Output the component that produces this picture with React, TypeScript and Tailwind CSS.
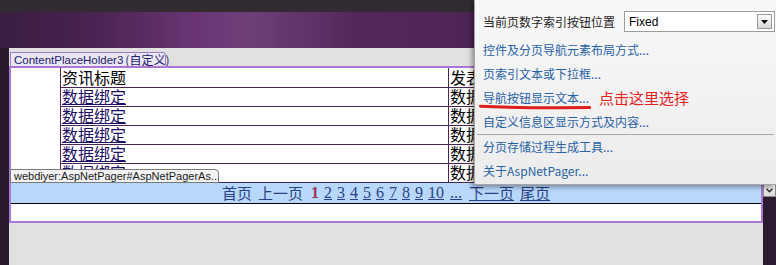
import React from "react";

const rows = [0, 1, 2, 3, 4];

export default function App() {
  return (
    <div className="relative w-[776px] h-[265px] overflow-hidden bg-[#2a1a2e] font-['Liberation_Sans',sans-serif]">
      <div className="h-[12px] bg-[#322b32]" />
      <div className="h-[36px] bg-[linear-gradient(90deg,#3a1d41_0%,#4a2352_12%,#6a3473_25%,#70407a_32%,#55285d_45%,#4c2254_65%,#43204a_100%)]" />
      <div className="flex h-[217px]">
        <div className="w-[9px] bg-[#2a1a2e]" />
        <div className="w-[754px] bg-[#e1e1e1] flex flex-col">
          <div className="h-[4px]" />
          <div className="ml-[1px] w-[156px] h-[14px] bg-[#ebe6f4] border border-b-0 border-[#9a7cc6] rounded-tr-[4px] flex items-center pl-[3px] text-[11.5px] leading-[12px] text-[#20206a] whitespace-nowrap">
            <span>ContentPlaceHolder3</span>
            <span className="ml-[2px] font-['Noto_Sans_CJK_SC',sans-serif] text-[12px]">(自定义)</span>
          </div>
          <div className="border-2 border-[#a878d4] bg-white flex flex-col">
            <div className="ml-[49px] flex flex-col font-['Noto_Sans_CJK_SC',sans-serif] text-[16px] leading-[19px]">
              <div className="flex h-[20px] border-b border-l border-[#4a2658]">
                <div className="w-[388px] border-r border-[#4a2658] pl-[1px] text-black whitespace-nowrap">资讯标题</div>
                <div className="flex-1 pl-[1px] text-black whitespace-nowrap">发表时间</div>
              </div>
              {rows.map((r) => (
                <div key={r} className="flex h-[19px] border-b border-l border-[#4a2658]">
                  <div className="w-[388px] border-r border-[#4a2658] pl-[1px] leading-[17px] text-[#1c0e62] underline whitespace-nowrap">数据绑定</div>
                  <div className="flex-1 pl-[1px] leading-[17px] text-black whitespace-nowrap">数据绑定</div>
                </div>
              ))}
            </div>
            <div className="h-[21px] bg-[#b8d8fa] border-b border-black flex items-center justify-center gap-[5px] font-['Liberation_Serif','Noto_Sans_CJK_SC',serif] text-[16px] leading-[20px] text-[#2b3f86] whitespace-nowrap">
              <span className="font-['Noto_Sans_CJK_SC',sans-serif] text-[15px]">首页</span>
              <span className="ml-[1px] font-['Noto_Sans_CJK_SC',sans-serif] text-[15px]">上一页</span>
              <span className="ml-[3px] font-bold text-[#a03050]">1</span>
              {["2", "3", "4", "5", "6", "7", "8", "9", "10"].map((n) => (
                <span key={n} className="underline">{n}</span>
              ))}
              <span className="ml-[1px] underline">...</span>
              <span className="ml-[2px] underline font-['Noto_Sans_CJK_SC',sans-serif] text-[15px]">下一页</span>
              <span className="ml-[1px] underline font-['Noto_Sans_CJK_SC',sans-serif] text-[15px]">尾页</span>
            </div>
            <div className="h-[17px] bg-white" />
          </div>
        </div>
        <div className="flex-1 bg-[#2c1a31]" />
      </div>

      {/* tooltip label */}
      <div className="absolute left-[10px] top-[169px] w-[209px] h-[14px] bg-[#f3f3f3] border border-[#7a7a7a] rounded-tr-[4px] pl-[3px] text-[11px] leading-[12px] text-[#1a1a1a] whitespace-nowrap overflow-hidden">
        webdiyer:AspNetPager#AspNetPagerAs...
      </div>

      {/* smart tag arrow */}
      <div className="absolute left-[763px] top-[183px] w-[13px] h-[14px] bg-[linear-gradient(#f4f4f4,#dcdcdc)] border border-[#8a8a8a] flex items-center justify-center">
        <svg width="7" height="5" viewBox="0 0 7 5">
          <path d="M0.5 0.8 L3.5 3.8 L6.5 0.8" stroke="#222" strokeWidth="1.3" fill="none" />
        </svg>
      </div>

      {/* popup menu */}
      <div className="absolute left-[474px] top-0 w-[302px] h-[185px] bg-[linear-gradient(180deg,#f8f8f8,#ececec)] border-l border-b border-[#a6a6a6] shadow-[-2px_2px_5px_rgba(0,0,0,0.4)] font-['Noto_Sans_CJK_SC',sans-serif] text-[12px] leading-[16px]">
        <div className="flex items-center h-[21px] mt-[11px] pl-[8px]">
          <span className="w-[141px] text-[#1e1e1e] whitespace-nowrap">当前页数字索引按钮位置</span>
          <div className="w-[151px] h-[21px] border border-[#9c9c9c] bg-white flex items-center justify-between pl-[4px] pr-[2px]">
            <span className="font-['Liberation_Sans',sans-serif] text-[12px] text-black">Fixed</span>
            <div className="w-[15px] h-[15px] border border-[#9a9a9a] bg-[linear-gradient(#fbfbfb,#dadada)] flex items-center justify-center">
              <svg width="7" height="4" viewBox="0 0 7 4">
                <path d="M0 0 L7 0 L3.5 4 Z" fill="#111" />
              </svg>
            </div>
          </div>
        </div>
        <div className="mt-[6px] flex flex-col text-[#2861a4]">
          <div className="h-[24px] flex items-center pl-[8px] whitespace-nowrap">控件及分页导航元素布局方式...</div>
          <div className="h-[24px] flex items-center pl-[8px] whitespace-nowrap">页索引文本或下拉框...</div>
          <div className="relative h-[24px] flex items-center pl-[8px] whitespace-nowrap">
            <span>导航按钮显示文本...</span>
            <span className="ml-[10px] text-[15px] text-[#e2221e]">点击这里选择</span>
            <svg className="absolute left-[4px] top-[18px]" width="112" height="6" viewBox="0 0 112 6">
              <path d="M1.5 2.2 Q 40 4.2 110.5 3.6" stroke="#e01c1c" strokeWidth="3" strokeLinecap="round" fill="none" />
            </svg>
          </div>
          <div className="h-[24px] flex items-center pl-[8px] whitespace-nowrap">自定义信息区显示方式及内容...</div>
          <div className="mx-[2px] h-px bg-[#a9a9b2]" />
          <div className="h-[24px] flex items-center pl-[8px] whitespace-nowrap">分页存储过程生成工具...</div>
          <div className="h-[24px] flex items-center pl-[8px] whitespace-nowrap">关于AspNetPager...</div>
        </div>
      </div>
    </div>
  );
}
